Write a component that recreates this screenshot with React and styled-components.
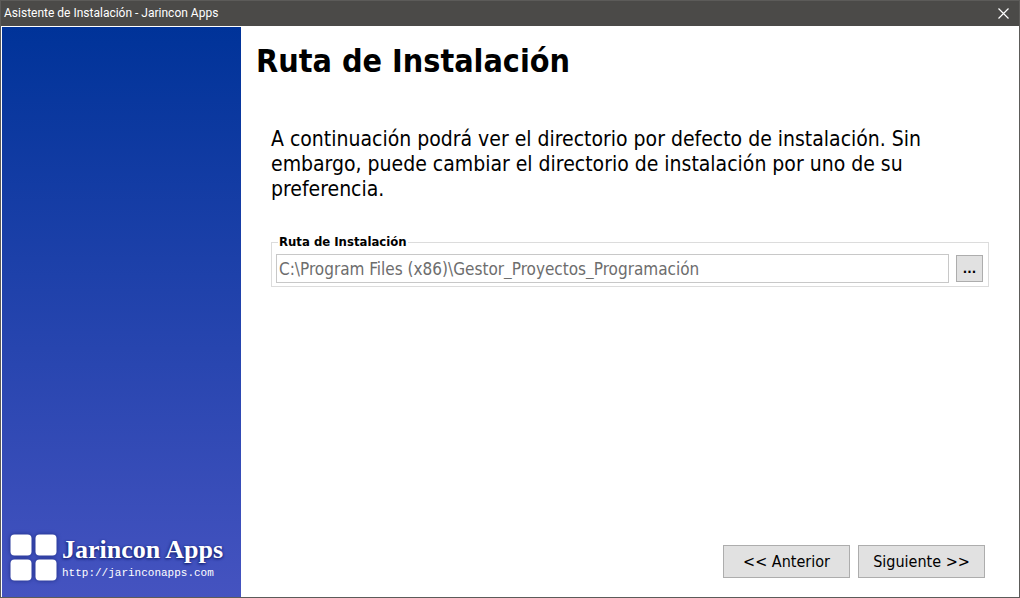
import React, { useState } from 'react';
import styled, { createGlobalStyle } from 'styled-components';

const GlobalStyle = createGlobalStyle`
  *, *::before, *::after { box-sizing: border-box; }
  body { margin: 0; background: #fff; }
  button, input { font: inherit; }
`;

const Window = styled.div`
  display: flex;
  flex-direction: column;
  min-height: 100vh;
  border: 1px solid #5c5b59;
  background: #fff;
  color: #000;
  font-family: "DejaVu Sans Condensed", "Noto Sans", sans-serif;
`;

const TitleBar = styled.header`
  display: flex;
  align-items: center;
  justify-content: space-between;
  height: 25px;
  padding: 0 10px 1px 3px;
  background: #4b4a48;
  color: #fff;
  font: 12px/24px Roboto, sans-serif;
`;

const CloseButton = styled.button`
  display: flex;
  padding: 0;
  border: 0;
  background: none;
  color: #fff;
`;

const Body = styled.div`
  display: flex;
  flex: 1;
  padding: 1px 0 0 1px;
`;

const Sidebar = styled.aside`
  display: flex;
  flex: 0 0 239px;
  align-items: flex-end;
  padding: 0 0 16px 8px;
  background: linear-gradient(#003399, #4553c0);
`;

const Brand = styled.div`
  display: flex;
  align-items: center;
  gap: 5px;
  color: #fff;
`;

const Mark = styled.svg`
  flex: none;
  overflow: visible;
  filter: drop-shadow(0 0 2px #1c2a80);
`;

const BrandText = styled.div`
  display: flex;
  flex-direction: column;
  white-space: nowrap;
`;

const BrandName = styled.span`
  font: bold 26px/30px "Liberation Serif", serif;
  text-shadow: -1px 1px 3px #16226e, 1px 1px 2px #26349a;
`;

const BrandLink = styled.a`
  color: #fff;
  font: 11px/16px "Liberation Mono", monospace;
  text-decoration: none;
`;

const Main = styled.main`
  display: flex;
  flex: 1;
  flex-direction: column;
  min-width: 0;
  padding: 14px 30px 19px 15px;
`;

const Heading = styled.h1`
  margin: 0;
  font-size: 32px;
  line-height: 40px;
`;

const Content = styled.form`
  display: flex;
  flex: 1;
  flex-direction: column;
  padding: 46px 0 0 15px;
`;

const Intro = styled.p`
  margin: 0 0 32px;
  padding-right: 50px;
  font-size: 21px;
  line-height: 25px;
`;

const PathGroup = styled.fieldset`
  display: flex;
  align-items: center;
  gap: 7px;
  min-width: 0;
  margin: 0;
  padding: 4px 5px 3px 4px;
  border: 1px solid #dcdcdc;
`;

const PathLegend = styled.legend`
  margin-left: 2px;
  padding: 0 1px;
  font-size: 13px;
  font-weight: bold;
  line-height: 16px;
`;

const PathInput = styled.input`
  flex: 1;
  min-width: 0;
  height: 29px;
  padding: 0 2px;
  border: 1px solid #c8c8c8;
  border-radius: 0;
  background: #fff;
  color: #6d6d6d;
  font-size: 17px;
`;

const Button = styled.button`
  width: ${(p) => (p.$compact ? '27px' : '127px')};
  height: ${(p) => (p.$compact ? '27px' : '33px')};
  padding: 0;
  border: 1px solid #adadad;
  border-radius: 0;
  background: #e1e1e1;
  color: #000;
  font-size: ${(p) => (p.$compact ? '13px' : '16px')};
  font-weight: ${(p) => (p.$compact ? 'bold' : 'normal')};
`;

const Actions = styled.footer`
  display: flex;
  justify-content: flex-end;
  gap: 8px;
  margin-top: auto;
  padding-right: 4px;
`;

export default function App() {
  const [path, setPath] = useState('C:\\Program Files (x86)\\Gestor_Proyectos_Programación');

  return (
    <>
      <GlobalStyle />
      <Window>
        <TitleBar>
          <span>Asistente de Instalación - Jarincon Apps</span>
          <CloseButton type="button" aria-label="Cerrar">
            <svg width="11" height="11" viewBox="0 0 11 11" fill="none" stroke="currentColor" strokeWidth="1.2">
              <path d="M.5.5l10 10M10.5.5l-10 10" />
            </svg>
          </CloseButton>
        </TitleBar>
        <Body>
          <Sidebar>
            <Brand>
              <Mark width="47" height="47" viewBox="0 0 47 47" fill="#fff" aria-hidden="true">
                <rect x="0.5" y="0.5" width="21" height="21" rx="4" />
                <rect x="25.5" y="0.5" width="21" height="21" rx="4" />
                <rect x="0.5" y="25.5" width="21" height="21" rx="4" />
                <rect x="25.5" y="25.5" width="21" height="21" rx="4" />
              </Mark>
              <BrandText>
                <BrandName>Jarincon Apps</BrandName>
                <BrandLink href="http://jarinconapps.com">http://jarinconapps.com</BrandLink>
              </BrandText>
            </Brand>
          </Sidebar>
          <Main>
            <Heading>Ruta de Instalación</Heading>
            <Content onSubmit={(e) => e.preventDefault()}>
              <Intro>
                A continuación podrá ver el directorio por defecto de instalación. Sin embargo, puede
                cambiar el directorio de instalación por uno de su preferencia.
              </Intro>
              <PathGroup>
                <PathLegend>
                  <label htmlFor="install-path">Ruta de Instalación</label>
                </PathLegend>
                <PathInput
                  id="install-path"
                  type="text"
                  value={path}
                  onChange={(e) => setPath(e.target.value)}
                />
                <Button $compact type="button" aria-label="Examinar">...</Button>
              </PathGroup>
              <Actions>
                <Button type="button">&lt;&lt; Anterior</Button>
                <Button type="submit">Siguiente &gt;&gt;</Button>
              </Actions>
            </Content>
          </Main>
        </Body>
      </Window>
    </>
  );
}
